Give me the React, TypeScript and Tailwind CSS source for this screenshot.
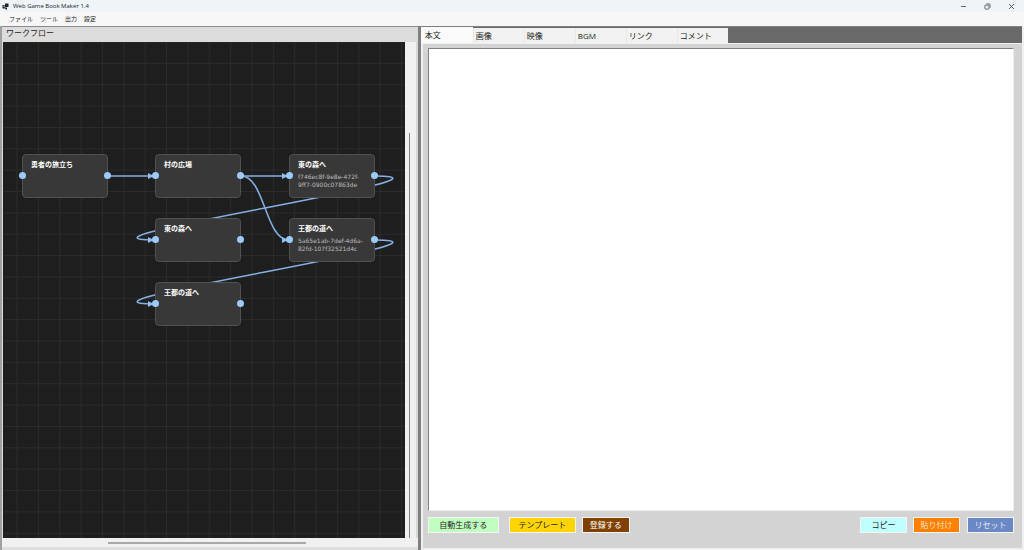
import { useState } from "react";

type StoryNode = { id: string; title: string; text?: string; x: number; y: number };

const NODE_W = 86;
const PORT_Y = 22;

const nodes: StoryNode[] = [
  { id: "start", title: "勇者の旅立ち", x: 19, y: 112 },
  { id: "plaza", title: "村の広場", x: 152, y: 112 },
  { id: "forest", title: "東の森へ", text: "f746ec8f-9e8e-472f-9ff7-0900c07863de", x: 286, y: 112 },
  { id: "forest2", title: "東の森へ", x: 152, y: 176 },
  { id: "road", title: "王都の道へ", text: "5a65e1ab-7def-4d6a-82fd-107f32521d4c", x: 286, y: 176 },
  { id: "road2", title: "王都の道へ", x: 152, y: 240 },
];

const edges = [
  ["start", "plaza"],
  ["plaza", "forest"],
  ["plaza", "road"],
  ["forest", "forest2"],
  ["road", "road2"],
];

const menus = ["ファイル", "ツール", "出力", "設定"];
const tabs = ["本文", "画像", "映像", "BGM", "リンク", "コメント"];

function edgePath(from: string, to: string) {
  const a = nodes.find((n) => n.id === from)!;
  const b = nodes.find((n) => n.id === to)!;
  const x1 = a.x + NODE_W;
  const y1 = a.y + PORT_Y;
  const x2 = b.x;
  const y2 = b.y + PORT_Y;
  const k = Math.abs(x2 - x1) / 2;
  return `M${x1} ${y1} C${x1 + k} ${y1} ${x2 - k} ${y2} ${x2} ${y2}`;
}

function TitleBar() {
  return (
    <header className="flex h-3 shrink-0 items-center bg-[#eff4f9] pl-[2px]">
      <svg width="7" height="7" viewBox="0 0 14 14" fill="#222">
        <path d="M6 1h7v7H6z" />
        <path d="M1 4h4v5h5v4H7v-2H1z" />
        <path d="M2 5h2v3H2z" fill="#777" />
      </svg>
      <h1 className="ml-1 flex-1 text-[6px] leading-3 text-[#222]">Web Game Book Maker 1.4</h1>
      <div className="flex gap-[10px] pr-[6px]">
        <button aria-label="最小化" className="flex h-3 w-[14px] items-center justify-center">
          <svg width="7" height="7" viewBox="0 0 7 7" stroke="#444" strokeWidth="0.8"><path d="M1 3.5h5" /></svg>
        </button>
        <button aria-label="元に戻す" className="flex h-3 w-[14px] items-center justify-center">
          <svg width="7" height="7" viewBox="0 0 7 7" fill="none" stroke="#333" strokeWidth="0.7">
            <rect x="0.9" y="2.1" width="4" height="4" rx="0.6" />
            <path d="M2.3 0.9h2.6a1.2 1.2 0 0 1 1.2 1.2v2.6" />
          </svg>
        </button>
        <button aria-label="閉じる" className="flex h-3 w-[14px] items-center justify-center">
          <svg width="7" height="7" viewBox="0 0 7 7" stroke="#333" strokeWidth="0.8"><path d="M1 1l5 5M6 1l-5 5" /></svg>
        </button>
      </div>
    </header>
  );
}

function NodeCard({ node }: { node: StoryNode }) {
  return (
    <div
      className="absolute h-11 w-[86px] rounded-[4px] border border-[#505050] bg-[#383838] px-2 pt-1"
      style={{ left: node.x, top: node.y }}
    >
      <h3 className="text-[7px] leading-3 font-bold text-white">{node.title}</h3>
      {node.text && (
        <p className="mt-[2px] font-['DejaVu_Sans',sans-serif] text-[6px] leading-[8px] text-[#bdbdbd]">{node.text}</p>
      )}
      <span className="absolute top-[17px] -left-1 size-[7px] rounded-full bg-[#9ccafc]" />
      <span className="absolute top-[17px] -right-1 size-[7px] rounded-full bg-[#9ccafc]" />
    </div>
  );
}

function Workflow() {
  return (
    <section className="flex w-[40.8%] shrink-0 flex-col border-l-2 border-[#a0a0a0] bg-[#dcdcdc]">
      <h2 className="h-4 border-t border-[#8a8a8a] pl-1 text-[8px] leading-3 text-[#222]">ワークフロー</h2>
      <div className="flex min-h-0 flex-1 pl-px">
        <div className="relative flex-1 overflow-hidden bg-[#1e1e1e]">
          <svg className="h-full w-full">
            <defs>
              <pattern id="grid" x="13.5" y="-0.5" width="21.36" height="21.36" patternUnits="userSpaceOnUse">
                <path d="M0.5 0V21.36M0 0.5H21.36" stroke="#2b2b2b" />
              </pattern>
              <marker id="arrow" markerWidth="6" markerHeight="6" refX="7" refY="3" orient="auto" markerUnits="userSpaceOnUse">
                <path d="M0 0L6 3L0 6z" fill="#8fbdf2" />
              </marker>
            </defs>
            <rect width="100%" height="100%" fill="url(#grid)" />
            {edges.map(([from, to]) => (
              <path key={from + to} d={edgePath(from, to)} fill="none" stroke="#86b0e4" strokeWidth="1.5" markerEnd="url(#arrow)" />
            ))}
          </svg>
          {nodes.map((n) => (
            <NodeCard key={n.id} node={n} />
          ))}
        </div>
        <div className="flex w-[11px] flex-col bg-[#f0f0f0] pl-1">
          <div className="mt-[91px] w-px flex-1 bg-[#858585]" />
        </div>
        <div className="w-[2px] bg-[#d8d8d8]" />
      </div>
      <div className="flex h-[9px] items-center bg-[#f0f0f0]">
        <div className="ml-[25.5%] h-[2px] w-[47.5%] bg-[#a8a8a8]" />
      </div>
      <div className="h-[3px] bg-[#dedede]" />
    </section>
  );
}

function Editor() {
  const [tab, setTab] = useState("本文");
  const [body, setBody] = useState("");
  const btn = "h-4 border border-[#f4f4f4] text-center text-[8px] leading-[14px]";

  return (
    <section className="flex min-w-0 flex-1 flex-col border-l-[3px] border-[#808080] bg-[#f0f0f0] pr-[2px] pb-[2px]">
      <div role="tablist" className="flex h-[17px] items-end border-t border-[#808080] bg-[#696969]">
        {tabs.map((t) => (
          <button
            key={t}
            role="tab"
            aria-selected={tab === t}
            onClick={() => setTab(t)}
            className={
              tab === t
                ? "h-4 w-[52px] bg-[#fafafa] pl-1 text-left text-[8px] leading-[14px] text-[#222]"
                : "h-[15px] w-[51px] border-l border-[#e8e8e8] bg-[#f2f2f2] pl-[2px] text-left text-[8px] leading-[15px] text-[#222]"
            }
          >
            {t}
          </button>
        ))}
      </div>
      <div className="mt-px ml-[2px] flex min-h-0 flex-1 flex-col bg-[#d3d3d3] pt-1 pr-2 pl-[5px]">
        <textarea
          aria-label="本文"
          value={body}
          onChange={(e) => setBody(e.target.value)}
          className="min-h-0 w-full flex-1 resize-none border border-t-[#808080] border-r-[#eeeeee] border-b-[#eeeeee] border-l-[#808080] bg-white p-1 text-[8px] outline-none"
        />
        <div className="flex pt-[6px] pb-[15px]">
          <button className={`${btn} w-[71px] bg-[#c0ffc0] text-[#222]`}>自動生成する</button>
          <button className={`${btn} ml-[10px] w-[67px] bg-[#ffd400] text-[#222]`}>テンプレート</button>
          <button className={`${btn} ml-[6px] w-12 bg-[#804000] text-white`}>登録する</button>
          <button className={`${btn} ml-auto w-[47px] bg-[#c0ffff] text-[#222]`}>コピー</button>
          <button className={`${btn} ml-[6px] w-[47px] bg-[#ff8000] text-[#fbe3cc]`}>貼り付け</button>
          <button className={`${btn} ml-[7px] w-[47px] bg-[#6b88c6] text-[#e4eaf5]`}>リセット</button>
        </div>
      </div>
    </section>
  );
}

export default function App() {
  return (
    <div className="flex h-screen flex-col bg-[#f0f0f0] font-['Open_Sans','Noto_Sans_CJK_JP',sans-serif]">
      <TitleBar />
      <nav className="flex h-[14px] shrink-0 items-center gap-[7px] bg-[#f7f7f7] pl-[9px]">
        {menus.map((m) => (
          <button key={m} className="text-[6px] leading-3 text-[#222]">{m}</button>
        ))}
      </nav>
      <main className="flex min-h-0 flex-1">
        <Workflow />
        <Editor />
      </main>
    </div>
  );
}
